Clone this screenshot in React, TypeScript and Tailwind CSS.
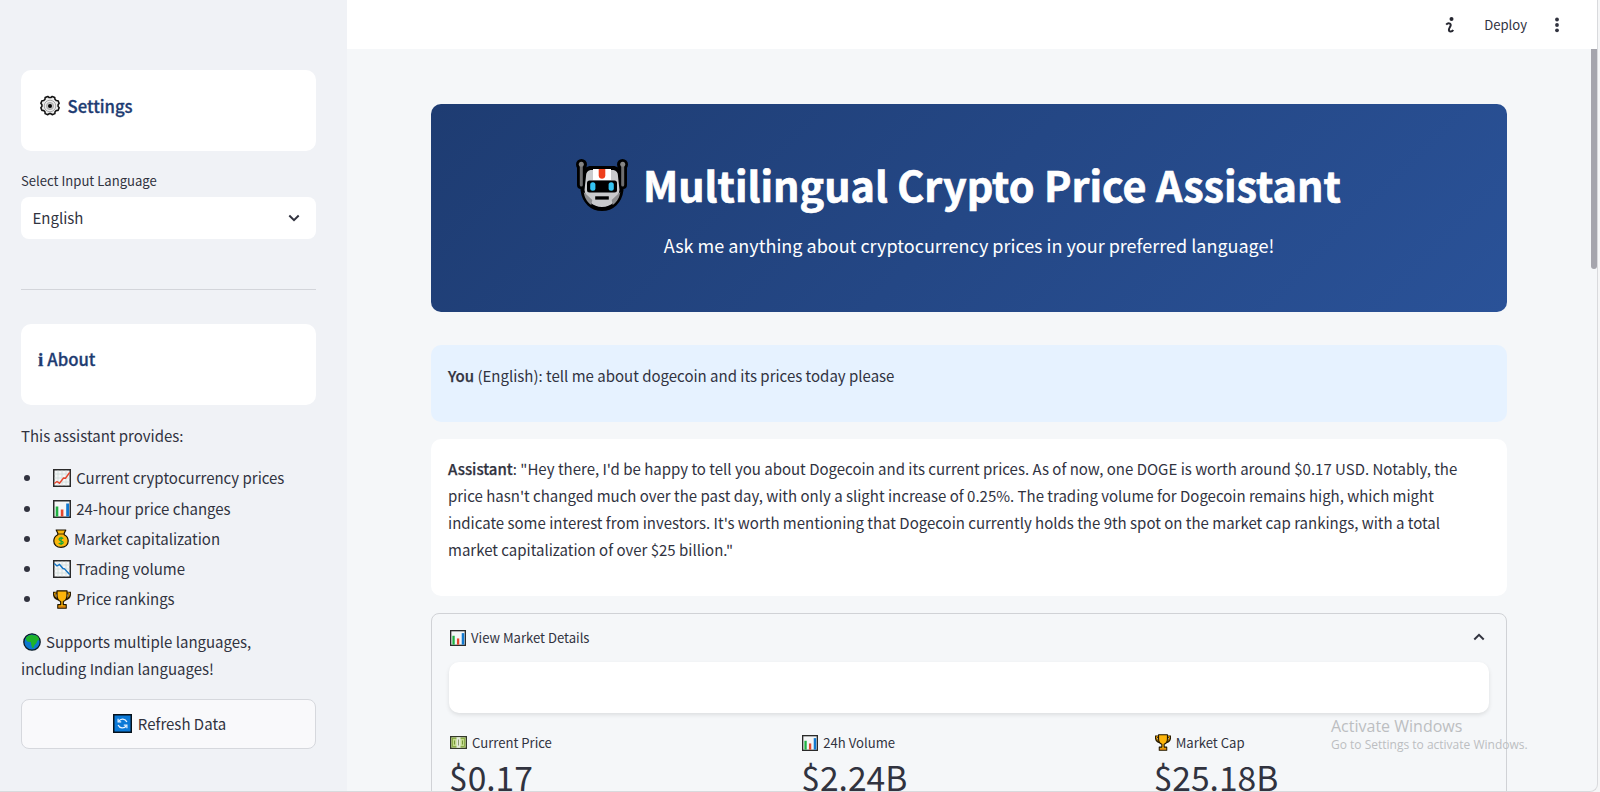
import React from "react";

type IconProps = { className?: string };

const Gear = ({ className }: IconProps) => (
  <svg viewBox="0 0 24 24" className={className}>
    <path
      d="M9.600 1.600l1.500 1.200h1.800l1.500-1.200 2.800 1.100.2 1.900 1.400 1.400 1.900.2 1.300 2.800-1.200 1.600v1.800l1.200 1.500-1.200 2.900-2 .2-1.300 1.300-.2 2-2.900 1.200-1.500-1.200h-1.800l-1.500 1.200-2.900-1.200-.2-2-1.300-1.300-2-.2L2 13.900l1.200-1.500v-1.800L2 9.100l1.200-2.900 2-.2L6.500 4.700l.2-1.900z"
      fill="#ececec"
      stroke="#111"
      strokeWidth="1.700"
      strokeLinejoin="round"
    />
    <circle cx="12" cy="12" r="6.300" fill="#ececec" stroke="#a0a0a0" strokeWidth="1" />
    <circle cx="12" cy="12" r="4" fill="#c4c4c4" stroke="#999" strokeWidth=".6" />
    <circle cx="12" cy="12" r="2.200" fill="#000" />
  </svg>
);

const ChartFrame = ({ className, children }: IconProps & { children: React.ReactNode }) => (
  <svg viewBox="0 0 18 18" className={className}>
    <rect x=".75" y=".75" width="16.500" height="16.500" fill="#f4f6f7" stroke="#2a2a2a" strokeWidth="1.500" />
    {children}
  </svg>
);

const grid = "M1.500 5H16.500M1.500 9H16.500M1.500 13H16.500M5 1.500V16.500M9 1.500V16.500M13 1.500V16.500";

const ChartUp = ({ className }: IconProps) => (
  <ChartFrame className={className}>
    <path d={grid} stroke="#cfdcd8" strokeWidth=".8" />
    <path d="M1.300 14.500L4 12.500l2.500 1.700L10.500 9l2 .2L16.700 3.500" fill="none" stroke="#e4442c" strokeWidth="1.400" />
  </ChartFrame>
);

const ChartDown = ({ className }: IconProps) => (
  <ChartFrame className={className}>
    <path d={grid} stroke="#cfdcd8" strokeWidth=".8" />
    <path d="M1.300 3.500L4 6l2.500-1.500L10 8.500l1.500.3L16.700 14.500" fill="none" stroke="#0f72c4" strokeWidth="1.400" />
  </ChartFrame>
);

const BarChart = ({ className }: IconProps) => (
  <ChartFrame className={className}>
    <rect x="2.700" y="6.500" width="2.600" height="10" fill="#1fb141" />
    <rect x="7.800" y="9.500" width="2.600" height="7" fill="#e5482f" />
    <rect x="13.200" y="3.500" width="2.800" height="13" fill="#1279d0" />
  </ChartFrame>
);

const MoneyBag = ({ className }: IconProps) => (
  <svg viewBox="0 0 16 19" className={className}>
    <path
      d="M3.200 1h9.600l-1.600 3.300v1.500c2.600 1.300 4 3.600 4 6.300 0 3.700-2.800 6.200-7.200 6.200S.8 15.800.8 12.100c0-2.700 1.400-5 4-6.300V4.300z"
      fill="#fbb80c"
      stroke="#1a1200"
      strokeWidth="1.200"
      strokeLinejoin="round"
    />
    <path d="M4.300 5h7.400" stroke="#4a3500" strokeWidth="1" />
    <path d="M10.200 9.600C9.600 8.700 6 8.500 6 10.300c0 1.900 4.200 1.100 4.200 3.100 0 1.900-3.700 1.800-4.400.6M8.100 7.700v8.300" fill="none" stroke="#16a637" strokeWidth="1.200" />
  </svg>
);

const Trophy = ({ className }: IconProps) => (
  <svg viewBox="0 0 18 19" className={className}>
    <path d="M4.500 3H1.100c0 3.400 1 5.600 4.400 6.200M13.500 3h3.400c0 3.400-1 5.600-4.400 6.200" fill="none" stroke="#2a1c00" strokeWidth="2.600" />
    <path d="M4.500 3H1.600c.1 2.800 1.100 4.700 3.900 5.400M13.500 3h2.900c-.1 2.800-1.100 4.700-3.900 5.400" fill="none" stroke="#f7a900" strokeWidth="1" />
    <path d="M4 .8h10v4.400c0 3.300-1.600 5.500-3.700 6.300v3.200h2.900v3.500H4.800v-3.500h2.900v-3.200C5.600 10.700 4 8.500 4 5.200z" fill="#fcb50b" stroke="#1e1400" strokeWidth="1.200" strokeLinejoin="round" />
    <path d="M5.400 16.400h7.200v1.200H5.400z" fill="#c36a12" />
  </svg>
);

const Globe = ({ className }: IconProps) => (
  <svg viewBox="0 0 18 18" className={className}>
    <circle cx="9" cy="9" r="8.200" fill="#0c78cf" stroke="#0b1a24" strokeWidth="1.300" />
    <path d="M3 4.600C4.500 2.800 6.800 1.700 9 1.700l2 .7 2-.2c2 1.200 3 2.700 3.300 4.800l-1.800.6-1.300 2.900-1.700 1.600-1 2.600-1.300.2-1-3.500-.3-2.300-3.200-.4L3 7z" fill="#1db32b" />
  </svg>
);

const Refresh = ({ className }: IconProps) => (
  <svg viewBox="0 0 19 19" className={className}>
    <rect x=".75" y=".75" width="17.500" height="17.500" fill="#0b79d7" stroke="#06121c" strokeWidth="1.500" />
    <path d="M5.600 7.400A4.700 4.700 0 0 1 13.900 8M13.400 11.600A4.700 4.700 0 0 1 5.100 11" fill="none" stroke="#e9f4ff" strokeWidth="1.300" />
    <path d="M5.100 4.700v3.100h3.100M13.900 14.300v-3.100h-3.100" fill="none" stroke="#e9f4ff" strokeWidth="1.200" />
  </svg>
);

const Banknote = ({ className }: IconProps) => (
  <svg viewBox="0 0 17 13" className={className}>
    <rect x=".6" y=".6" width="15.800" height="11.800" fill="#c3db8c" stroke="#34382c" strokeWidth="1.300" />
    <rect x="2.500" y="2.500" width="12" height="8" fill="none" stroke="#7fa43a" strokeWidth=".8" />
    <rect x="6.500" y="1.200" width="4" height="10.600" fill="#e4eadb" />
    <path d="M8.500 3.500v6" stroke="#8d9c74" strokeWidth="1" />
    <path d="M4.500 4.500v4M12.500 4.500v4" stroke="#75933c" strokeWidth="1" />
  </svg>
);

const Robot = ({ className }: IconProps) => (
  <svg viewBox="0 0 52 52" className={className}>
    <g stroke="#000" strokeLinecap="round" fill="none">
      <path d="M5 6v20M47 6v20" strokeWidth="8" />
      <circle cx="5.500" cy="5.500" r="3" strokeWidth="5" />
      <circle cx="46.500" cy="5.500" r="3" strokeWidth="5" />
    </g>
    <path d="M14 9h24c4 1 6 4 6 8l1.500 14C44 43 36 50 26 50S8 43 6.500 31L8 17c0-4 2-7 6-8z" fill="#c9cacc" stroke="#000" strokeWidth="4" strokeLinejoin="round" />
    <path d="M5.300 6v20M46.700 6v20" stroke="#6f6f70" strokeWidth="3" strokeLinecap="round" />
    <circle cx="5.300" cy="5.300" r="2.500" fill="#858585" />
    <circle cx="46.700" cy="5.300" r="2.500" fill="#858585" />
    <path d="M7.800 33l8.500 8-1 5C10.500 42.500 8.300 38 7.800 33zM44.200 33l-8.500 8 1 5c4.800-3.500 7-8 7.500-13z" fill="#8d8e90" />
    <path d="M17 10h18v11H17z" fill="#fff" />
    <path d="M22.700 10h6.600v6.500c0 4.300-6.600 4.300-6.600 0z" fill="#ee3f1d" />
    <rect x="11" y="21.500" width="30" height="12" rx="2.500" fill="#000" />
    <rect x="14.200" y="23.300" width="5.200" height="8.400" rx="2.500" fill="#35c4f2" />
    <rect x="32.600" y="23.300" width="5.200" height="8.400" rx="2.500" fill="#35c4f2" />
    <rect x="19.200" y="37.300" width="13.600" height="3.300" fill="#000" />
  </svg>
);

const Chevron = ({ className }: IconProps) => (
  <svg viewBox="0 0 12 8" className={className}>
    <path d="M1.300 1.500L6 6.100l4.700-4.600" fill="none" stroke="#31333f" strokeWidth="2" />
  </svg>
);

const features = [
  { Icon: ChartUp, box: "h-[18px] w-[18px]", gap: "gap-[5.200px]", label: "Current cryptocurrency prices" },
  { Icon: BarChart, box: "h-[18px] w-[18px]", gap: "gap-[5.200px]", label: "24-hour price changes" },
  { Icon: MoneyBag, box: "h-[19px] w-[16px]", gap: "gap-[5px]", label: "Market capitalization" },
  { Icon: ChartDown, box: "h-[18px] w-[18px]", gap: "gap-[5.200px]", label: "Trading volume" },
  { Icon: Trophy, box: "h-[19px] w-[18px]", gap: "gap-[5.200px]", label: "Price rankings" },
];

const metrics = [
  { Icon: Banknote, box: "h-[13px] w-[17px]", label: "Current Price", value: "$0.17" },
  { Icon: BarChart, box: "h-[16px] w-[16px]", label: "24h Volume", value: "$2.24B" },
  { Icon: Trophy, box: "h-[17px] w-[16px]", label: "Market Cap", value: "$25.18B" },
];

function Sidebar() {
  return (
    <aside className="flex h-full w-[347px] shrink-0 flex-col bg-[#f0f2f6] pt-[70px] pr-[31px] pl-[21px]">
      <div className="flex h-[81px] shrink-0 items-start rounded-[10px] bg-white pt-[21px] pl-[18px]">
        <Gear className="mt-[4px] mr-[6.500px] h-[22px] w-[22px]" />
        <h3 className="text-[16.700px] leading-[30px] font-medium text-[#1e3c72] [-webkit-text-stroke:0.3px_#1e3c72]">Settings</h3>
      </div>
      <label className="mt-[20px] mb-[6px] block h-5 text-[13.100px] leading-5">Select Input Language</label>
      <div className="flex h-[42px] shrink-0 items-center justify-between rounded-lg bg-white pr-4 pl-[11.500px]">
        <span className="text-[15px] leading-[26px]">English</span>
        <Chevron className="h-2 w-3" />
      </div>
      <hr className="mt-[50px] border-[#d3d5da]" />
      <div className="mt-[34px] flex h-[81px] shrink-0 items-start rounded-[10px] bg-white pt-[20px] pl-[17px] text-[#1e3c72]">
        <h3 className="text-[16.700px] leading-[30px] font-medium [-webkit-text-stroke:0.3px_#1e3c72]">
          <span className="mr-[4px] inline-block font-['Liberation_Serif',serif] text-[19px] leading-none font-bold">i</span>
          About
        </h3>
      </div>
      <p className="mt-[17px] h-[27px] text-[15px] leading-[27px]">This assistant provides:</p>
      <ul className="mt-[14.400px]">
        {features.map(({ Icon, box, gap, label }) => (
          <li key={label} className="flex h-[30.200px] items-center pl-[3px] text-[15px] leading-[30.200px]">
            <span className="mr-[23px] h-[6px] w-[6px] rounded-full bg-[#31333f]" />
            <span className={`flex items-center ${gap}`}>
              <Icon className={box} />
              {label}
            </span>
          </li>
        ))}
      </ul>
      <div className="mt-[14.700px] text-[15px] leading-[26.800px]">
        <div className="flex items-center gap-[5.500px] pl-[1.500px]">
          <Globe className="h-[18px] w-[18px]" />
          Supports multiple languages,
        </div>
        <div>including Indian languages!</div>
      </div>
      <button className="mt-[16.300px] flex h-[50px] shrink-0 items-center justify-center gap-[6px] rounded-lg border border-[#d6d8dd] bg-[#f9f9fb] pl-[2px] text-[15px]">
        <Refresh className="h-[19px] w-[19px]" />
        <span className="leading-[27px]">Refresh Data</span>
      </button>
    </aside>
  );
}

function Header() {
  return (
    <header className="flex h-[49px] shrink-0 items-center justify-end bg-white pr-[38px]">
      <svg viewBox="0 0 10 18" className="mr-[29px] h-[18px] w-[10px]">
        <circle cx="6.500" cy="2.900" r="2" fill="#262730" />
        <path d="M1.200 8.700c1.800-2.200 4.900-1.500 4.500.6-.3 1.600-2 3-1.800 4.800.2 2 3.200 1.800 4.300-.2" fill="none" stroke="#262730" strokeWidth="2" />
      </svg>
      <span className="mr-[28px] text-[13.100px] leading-5">Deploy</span>
      <svg viewBox="0 0 4 16" className="h-4 w-1">
        <circle cx="2" cy="2.500" r="1.900" fill="#31333f" />
        <circle cx="2" cy="8" r="1.900" fill="#31333f" />
        <circle cx="2" cy="13.300" r="1.900" fill="#31333f" />
      </svg>
    </header>
  );
}

export default function App() {
  return (
    <div className="relative h-[792px] w-[1600px] overflow-hidden bg-[#f5f6f7] font-['Noto_Sans_CJK_SC','Noto_Sans',sans-serif] text-[#31333f]">
      <div className="flex h-[792px] w-[1598px] overflow-hidden rounded-br-[8px] border-r border-b border-[#d9dadd] bg-[#f5f7f9]">
        <Sidebar />
        <main className="flex min-w-0 flex-1 flex-col">
          <Header />
          <div className="flex min-h-0 flex-1 justify-between">
            <div className="ml-[84px] w-[1076px] pt-[54.500px]">
              <section className="h-[208.500px] rounded-[10px] bg-[linear-gradient(135deg,#1e3c72,#2a5298)] pt-[55px] text-white">
                <div className="flex h-[50px] items-start pl-[145px]">
                  <Robot className="h-[52px] w-[52px] shrink-0" />
                  <h1 className="ml-[15px] text-[41.300px] leading-[50px] font-bold whitespace-nowrap [-webkit-text-stroke:0.7px_#fff]">Multilingual Crypto Price Assistant</h1>
                </div>
                <p className="mt-[23.700px] text-center text-[18px] leading-[27px]">Ask me anything about cryptocurrency prices in your preferred language!</p>
              </section>

              <section className="mt-[33.300px] h-[76.700px] rounded-[10px] bg-[#e6f2ff] px-[17px] pt-[17.600px] text-[15px] leading-[26.800px]">
                <strong className="font-medium [-webkit-text-stroke:0.25px_#31333f]">You</strong> (English): tell me about dogecoin and its prices today please
              </section>

              <section className="mt-[16.700px] h-[157.300px] rounded-[10px] bg-white px-[17px] pt-[17.600px] text-[15px] leading-[26.800px]">
                <strong className="font-medium [-webkit-text-stroke:0.25px_#31333f]">Assistant</strong>: "Hey there, I'd be happy to tell you about Dogecoin and its current prices. As of now, one DOGE is worth around $0.17 USD. Notably, the price hasn't changed much over the past day, with only a slight increase of 0.25%. The trading volume for Dogecoin remains high, which might indicate some interest from investors. It's worth mentioning that Dogecoin currently holds the 9th spot on the market cap rankings, with a total market capitalization of over $25 billion."
              </section>

              <section className="mt-[17px] h-[400px] rounded-lg border border-[#d0d2d6] px-[17px] pt-[14px]">
                <div className="flex h-5 items-center gap-[5px] pl-[1px] text-[13.100px] leading-5">
                  <BarChart className="h-4 w-4" />
                  View Market Details
                  <Chevron className="mr-1 mb-[2px] ml-auto h-2 w-3 rotate-180" />
                </div>
                <div className="mt-[14px] h-[51px] rounded-[10px] bg-white shadow-[0_2px_4px_rgba(0,0,0,0.1)]" />
                <div className="mt-[20px] grid grid-cols-3 gap-[18px] pl-[1px]">
                  {metrics.map(({ Icon, box, label, value }) => (
                    <div key={label}>
                      <div className="flex h-5 items-center gap-[5px] text-[13.100px] leading-5">
                        <Icon className={box} />
                        {label}
                      </div>
                      <div className="-ml-[1px] mt-[4px] text-[33.600px] leading-10">{value}</div>
                    </div>
                  ))}
                </div>
              </section>
            </div>
            <div className="h-[220px] w-[6px] rounded-b-full bg-[#a5a5ad]" />
          </div>
        </main>
      </div>
      <div className="absolute top-[714px] left-[1331px] font-['Open_Sans','Noto_Sans',sans-serif] text-[#bcbec1]">
        <div className="text-[16px] leading-6">Activate Windows</div>
        <div className="text-[12px] leading-[14px]">Go to Settings to activate Windows.</div>
      </div>
    </div>
  );
}
